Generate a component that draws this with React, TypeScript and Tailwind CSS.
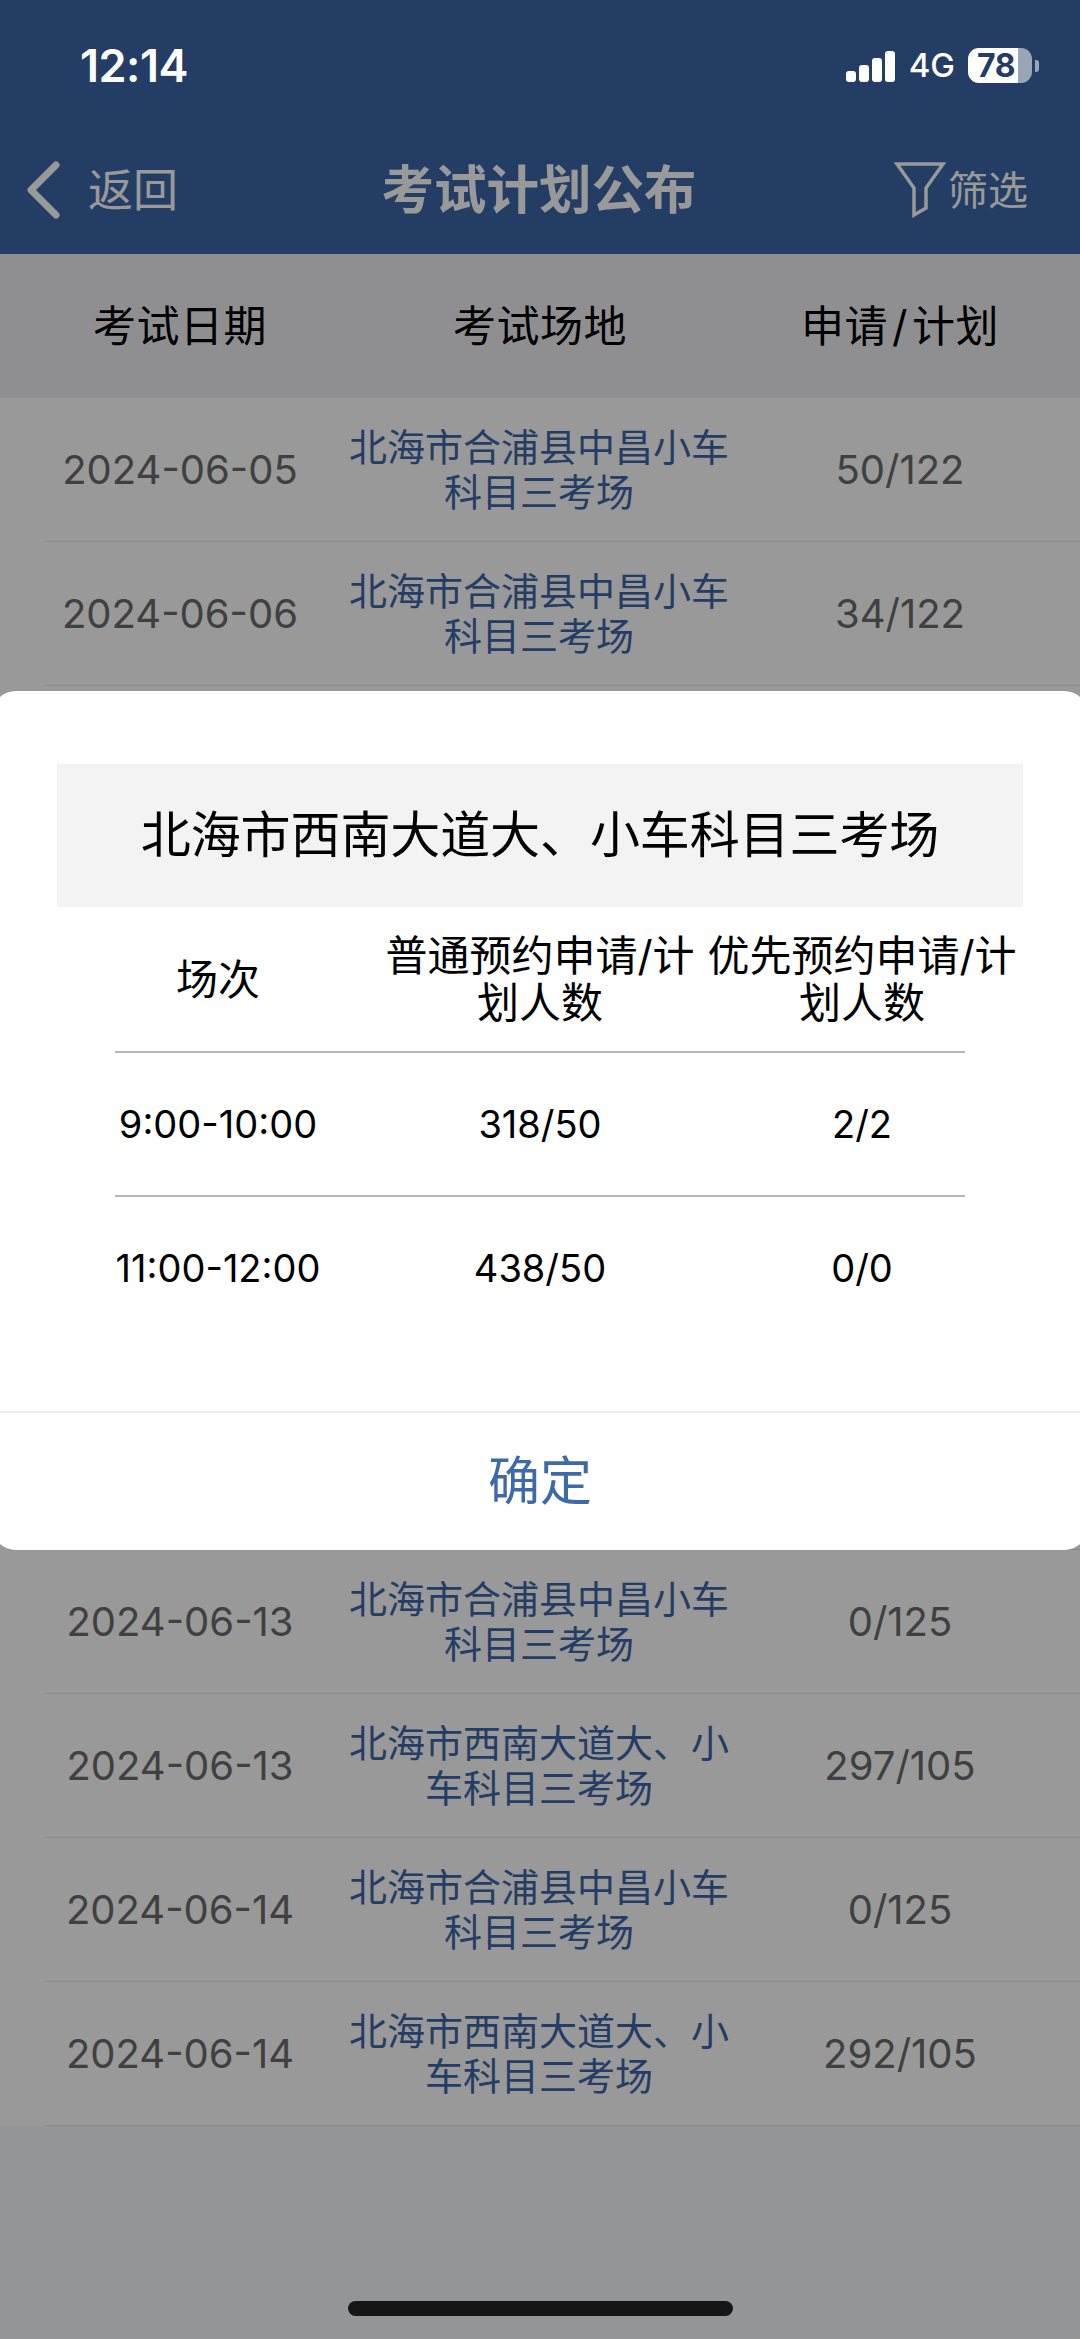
const FONT = '"Inter","Noto Sans CJK SC",sans-serif';
const HN = "北海市合浦县中昌小车科目三考场";
const XN = "北海市西南大道大、小车科目三考场";

const rows: [string, string, string][] = [
  ["2024-06-05", HN, "50/122"],
  ["2024-06-06", HN, "34/122"],
  ["2024-06-07", HN, "28/122"],
  ["2024-06-07", XN, "310/105"],
  ["2024-06-11", HN, "12/125"],
  ["2024-06-11", XN, "305/105"],
  ["2024-06-12", HN, "3/125"],
  ["2024-06-12", XN, "301/105"],
  ["2024-06-13", HN, "0/125"],
  ["2024-06-13", XN, "297/105"],
  ["2024-06-14", HN, "0/125"],
  ["2024-06-14", XN, "292/105"],
];

function Row({ date, place, count }: { date: string; place: string; count: string }) {
  return (
    <div className="h-[144px] flex flex-col bg-white">
      <div className="flex-1 grid grid-cols-3 items-center text-center text-[#6b6b6b]">
        <div className="text-[40px] leading-[44px]">{date}</div>
        <div className="text-[38px] leading-[44.5px] text-[#3c67a8] justify-self-center w-[384px] pr-[2px]">{place}</div>
        <div className="text-[40px] leading-[44px]">{count}</div>
      </div>
      <div className="h-px ml-[45px] bg-[#e4e4e6]" />
    </div>
  );
}

function ModalRow({ a, b, c }: { a: string; b: string; c: string }) {
  return (
    <div className="grid grid-cols-3 items-center text-center h-[142px] text-[38px] text-black">
      <div>{a}</div>
      <div>{b}</div>
      <div>{c}</div>
    </div>
  );
}

export default function App() {
  return (
    <div className="relative w-[1080px] h-[2339px] overflow-hidden bg-[#f7f8fb]" style={{ fontFamily: FONT }}>
      <header className="h-[254px] bg-[#3b66a8] flex flex-col">
        <div className="relative z-20 h-[132px] flex items-start justify-between text-white">
          <div className="ml-[80px] mt-[39px] text-[45px] leading-[54px] font-semibold tracking-[-0.5px]">12:14</div>
          <div className="mr-[41px] mt-[48px] flex items-center">
            <div className="flex items-end gap-[3px] h-[31px] mt-[2px]">
              <div className="w-[10px] h-[11px] rounded-[3px] bg-white" />
              <div className="w-[10px] h-[17px] rounded-[3px] bg-white" />
              <div className="w-[10px] h-[24px] rounded-[3px] bg-white" />
              <div className="w-[10px] h-[31px] rounded-[3px] bg-white" />
            </div>
            <div className="ml-[14px] text-[33px] leading-[35px] font-medium">4G</div>
            <div className="ml-[13px] w-[64px] h-[35px] rounded-[11px] bg-[linear-gradient(to_right,#ffffff_78%,#9aa5b7_78%)] text-[#233d64] text-[32px] leading-[35px] font-bold text-center tracking-[-0.5px] pr-[8px]">
              78
            </div>
            <div className="ml-[3px] w-[4px] h-[12px] rounded-r-[3px] bg-[#9aa5b7]" />
          </div>
        </div>
        <div className="flex-1 grid grid-cols-[1fr_auto_1fr] items-center pb-[6px] text-white">
          <div className="flex items-center">
            <svg width="36" height="58" viewBox="0 0 36 58" fill="none" className="ml-[25px]">
              <path d="M31 4 L6 29 L31 54" stroke="#ffffff" strokeWidth="7" strokeLinecap="round" strokeLinejoin="round" />
            </svg>
            <span className="ml-[27px] text-[45px] leading-none">返回</span>
          </div>
          <div className="mr-[2px] text-[52.5px] leading-none font-bold">考试计划公布</div>
          <div className="flex items-center justify-end pr-[52px]">
            <svg width="52" height="58" viewBox="0 0 52 58" fill="none" className="mr-[2px]">
              <path d="M3 3 H49 L32 27 V47 L20 54 V27 Z" stroke="#ffffff" strokeWidth="3.5" strokeLinejoin="miter" />
            </svg>
            <span className="mt-[2px] text-[40px] leading-none">筛选</span>
          </div>
        </div>
      </header>

      <div className="h-[144px] bg-[#eeeef3] grid grid-cols-3 items-center text-center text-[43px] tracking-[0.5px] text-black">
        <div>考试日期</div>
        <div>考试场地</div>
        <div>
          申请<span className="mx-[4px]">/</span>计划
        </div>
      </div>

      <div>
        {rows.map((r, i) => (
          <Row key={i} date={r[0]} place={r[1]} count={r[2]} />
        ))}
      </div>

      <div className="absolute inset-0 z-10 bg-black/40">
        <div className="mt-[691px] -mx-[8px] h-[859px] bg-white rounded-[24px] flex flex-col">
          <div className="flex-1 pt-[73px] px-[65px]">
            <div className="h-[143px] bg-[#f3f3f3] flex items-center justify-center text-[50px] tracking-[-0.1px] text-black">
              {XN}
            </div>
            <div className="grid grid-cols-3 items-center text-center h-[144px] text-[42px] leading-[47px] text-black">
              <div>场次</div>
              <div>普通预约申请/计划人数</div>
              <div>优先预约申请/计划人数</div>
            </div>
            <div className="h-[2px] mx-[58px] bg-[#b5b5b5]" />
            <ModalRow a="9:00-10:00" b="318/50" c="2/2" />
            <div className="h-[2px] mx-[58px] bg-[#b5b5b5]" />
            <ModalRow a="11:00-12:00" b="438/50" c="0/0" />
          </div>
          <div className="h-[139px] border-t-2 border-[#ececec] flex items-center justify-center text-[52px] text-[#3f6aa9]">
            确定
          </div>
        </div>
      </div>

      <div className="absolute z-20 left-[348px] top-[2301px] w-[385px] h-[15px] rounded-[8px] bg-[#161616]" />
    </div>
  );
}
